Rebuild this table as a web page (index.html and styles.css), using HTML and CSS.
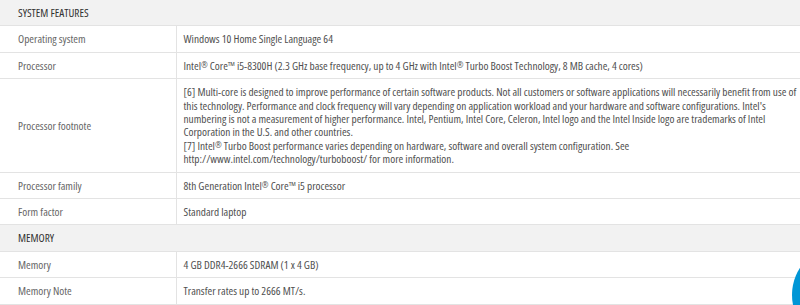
FILE: index.html
```html
<!DOCTYPE html>
<html lang="en">
<head>
<meta charset="utf-8">
<title>Specifications</title>
<link rel="stylesheet" href="styles.css">
</head>
<body>
<table class="specs">
  <colgroup><col class="col-label"><col class="col-value"></colgroup>
  <tbody>
    <tr class="group"><th colspan="2">SYSTEM FEATURES</th></tr>
    <tr><td class="label">Operating system</td><td class="value">Windows 10 Home Single Language 64</td></tr>
    <tr><td class="label">Processor</td><td class="value">Intel<span class="reg">®</span> Core™ i5-8300H (2.3 GHz base frequency, up to 4 GHz with Intel<span class="reg">®</span> Turbo Boost Technology, 8 MB cache, 4 cores)</td></tr>
    <tr><td class="label">Processor footnote</td><td class="value">[6] Multi-core is designed to improve performance of certain software products. Not all customers or software applications will necessarily benefit from use of<br>this technology. Performance and clock frequency will vary depending on application workload and your hardware and software configurations. Intel's<br>numbering is not a measurement of higher performance. Intel, Pentium, Intel Core, Celeron, Intel logo and the Intel Inside logo are trademarks of Intel<br>Corporation in the U.S. and other countries.<br>[7] Intel<span class="reg">®</span> Turbo Boost performance varies depending on hardware, software and overall system configuration. See<br>http://www.intel.com/technology/turboboost/ for more information.</td></tr>
    <tr><td class="label">Processor family</td><td class="value">8th Generation Intel<span class="reg">®</span> Core™ i5 processor</td></tr>
    <tr><td class="label">Form factor</td><td class="value">Standard laptop</td></tr>
    <tr class="group"><th colspan="2">MEMORY</th></tr>
    <tr><td class="label">Memory</td><td class="value">4 GB DDR4-2666 SDRAM (1 x 4 GB)</td></tr>
    <tr><td class="label">Memory Note</td><td class="value">Transfer rates up to 2666 MT/s.</td></tr>
  </tbody>
</table>
<div class="chat-clip"><div class="chat-bubble"></div></div>
</body>
</html>
```
FILE: styles.css
```css
html, body {
  margin: 0;
  padding: 0;
  background: #ffffff;
  overflow: hidden;
}
body {
  font-family: "Open Sans", "Noto Sans", sans-serif;
  font-stretch: condensed;
  font-size: 11.3px;
  color: #505050;
}
.specs {
  width: 800px;
  border-collapse: collapse;
  table-layout: fixed;
}
.col-label {
  width: 176px;
}
.specs td, .specs th {
  padding: 6px 0 6px 0;
  line-height: 13.4px;
  border-bottom: 1px solid #e3e3e3;
  vertical-align: middle;
  text-align: left;
  white-space: nowrap;
}
.group th {
  background: #f2f2f2;
  font-weight: normal;
  color: #333333;
  padding-left: 18px;
}
.specs .label {
  padding-left: 18px;
  color: #666666;
  border-right: 1px solid #e3e3e3;
}
.specs .value {
  padding-left: 7px;
  color: #505050;
}
.reg {
  font-size: 0.72em;
  vertical-align: 0.3em;
  line-height: 0;
}
.chat-clip {
  position: fixed;
  left: 788px;
  top: 245px;
  width: 12px;
  height: 60px;
  overflow: hidden;
}
.chat-bubble {
  margin-left: 4px;
  width: 100px;
  height: 100px;
  border-radius: 50%;
  background: #0096d6;
}
```
